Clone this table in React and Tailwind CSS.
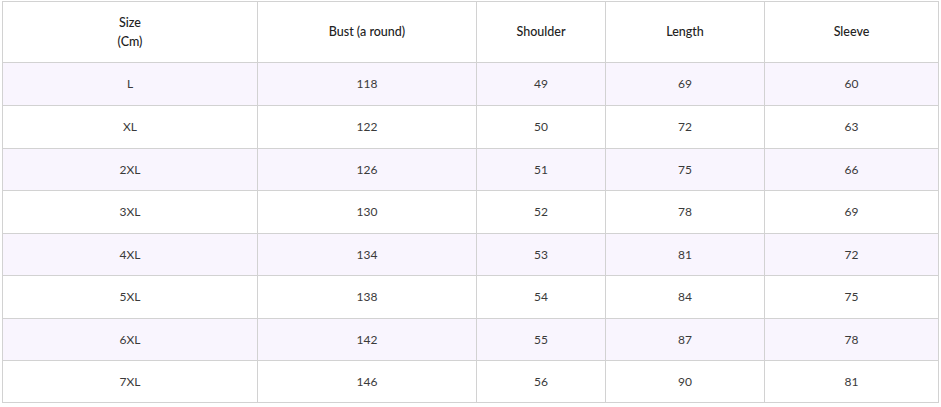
const headers = ["Bust (a round)", "Shoulder", "Length", "Sleeve"];

const rows = [
  { size: "L", vals: [118, 49, 69, 60], h: "h-[43px]" },
  { size: "XL", vals: [122, 50, 72, 63], h: "h-[43px]" },
  { size: "2XL", vals: [126, 51, 75, 66], h: "h-[42px]" },
  { size: "3XL", vals: [130, 52, 78, 69], h: "h-[43px]" },
  { size: "4XL", vals: [134, 53, 81, 72], h: "h-[42px]" },
  { size: "5XL", vals: [138, 54, 84, 75], h: "h-[43px]" },
  { size: "6XL", vals: [142, 55, 87, 78], h: "h-[42px]" },
  { size: "7XL", vals: [146, 56, 90, 81], h: "h-[42px]" },
];

const cell = "border border-[#d2d2d2] text-center align-middle p-0";

export default function App() {
  return (
    <div className="w-[941px] h-[407px] bg-white pt-[1px] pl-[2px] font-['Lato',sans-serif] text-[12px] text-[#3a3a3a]">
      <table className="border-collapse table-fixed w-[936px]">
        <colgroup>
          <col className="w-[255px]" />
          <col className="w-[219px]" />
          <col className="w-[129px]" />
          <col className="w-[159px]" />
          <col className="w-[174px]" />
        </colgroup>
        <thead>
          <tr className="h-[61px]">
            <th className={`${cell} font-medium text-[12.5px] text-[#222] leading-[19px]`}>
              Size
              <br />
              (Cm)
            </th>
            {headers.map((h) => (
              <th key={h} className={`${cell} font-medium text-[12.5px] text-[#222]`}>
                {h}
              </th>
            ))}
          </tr>
        </thead>
        <tbody>
          {rows.map((r, i) => (
            <tr key={r.size} className={`${r.h} ${i % 2 === 0 ? "bg-[#f9f5fe]" : "bg-white"}`}>
              <td className={cell}>{r.size}</td>
              {r.vals.map((v, j) => (
                <td key={j} className={cell}>
                  {v}
                </td>
              ))}
            </tr>
          ))}
        </tbody>
      </table>
    </div>
  );
}
